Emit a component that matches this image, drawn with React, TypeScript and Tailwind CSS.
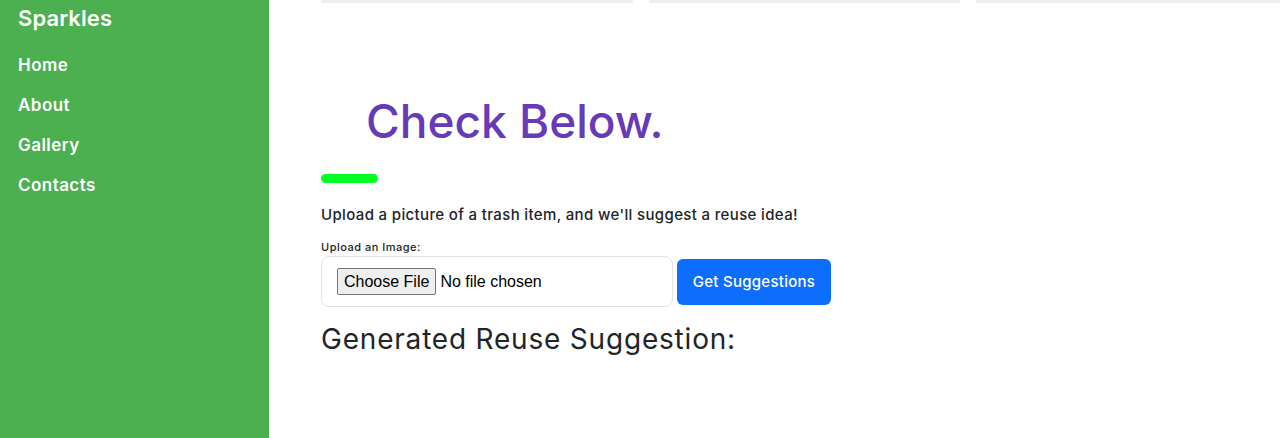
import React from 'react';

const navItems = ['Home', 'About', 'Gallery', 'Contacts'];

export default function App() {
  return (
    <div className="flex h-[438px] w-[1280px] overflow-hidden bg-white font-['Inter',sans-serif] text-[#212529]">
      {/* Sidebar */}
      <aside className="w-[269px] shrink-0 bg-[#4caf50] px-[18px] text-white">
        <div className="pt-[3px] text-[22px] font-semibold leading-[30px] tracking-[0.1px]">Sparkles</div>
        <nav className="mt-[20px] flex flex-col gap-[16px]">
          {navItems.map((item) => (
            <a key={item} href="#" className="text-[17px] font-semibold leading-[24px] tracking-[0.45px]">
              {item}
            </a>
          ))}
        </nav>
      </aside>

      {/* Main */}
      <main className="min-w-0 flex-1 pl-[52px]">
        <div className="flex gap-[16px]">
          <div className="h-[3px] w-[312px] shrink-0 bg-[#efefef]" />
          <div className="h-[3px] w-[311px] shrink-0 bg-[#efefef]" />
          <div className="h-[3px] w-[312px] shrink-0 bg-[#efefef]" />
        </div>

        <h1 className="mt-[90px] pl-[45px] text-[46px] font-medium leading-[56px] text-[#673ab7]">
          Check Below.
        </h1>
        <div className="mt-[25px] h-[9px] w-[57px] rounded-full bg-[#00ff22]" />

        <p className="mt-[21px] text-[15px] font-medium leading-[22px] tracking-[0.35px]">
          Upload a picture of a trash item, and we'll suggest a reuse idea!
        </p>

        <label className="mt-[14px] block text-[11px] font-medium leading-[14px] tracking-[0.5px]">
          Upload an Image:
        </label>
        <div className="mt-[2px] flex items-center gap-[4px]">
          <div className="flex h-[51px] w-[352px] items-center rounded-[8px] border border-[#e3e3e3] px-[15px]">
            <input
              type="file"
              className="font-['Liberation_Sans',sans-serif] text-[16px] text-black file:mr-[4px] file:h-[27px] file:rounded-[2px] file:border file:border-[#767676] file:bg-[#efefef] file:px-[6px] file:font-['Liberation_Sans',sans-serif] file:text-[16px] file:text-black"
            />
          </div>
          <button className="h-[46px] w-[154px] rounded-[6px] bg-[#0d6efd] pt-[2px] text-[15px] font-medium tracking-[0.27px] text-white">
            Get Suggestions
          </button>
        </div>

        <h2 className="mt-[14px] text-[28px] font-normal leading-[36px] tracking-[0.8px]">
          Generated Reuse Suggestion:
        </h2>
      </main>
    </div>
  );
}
